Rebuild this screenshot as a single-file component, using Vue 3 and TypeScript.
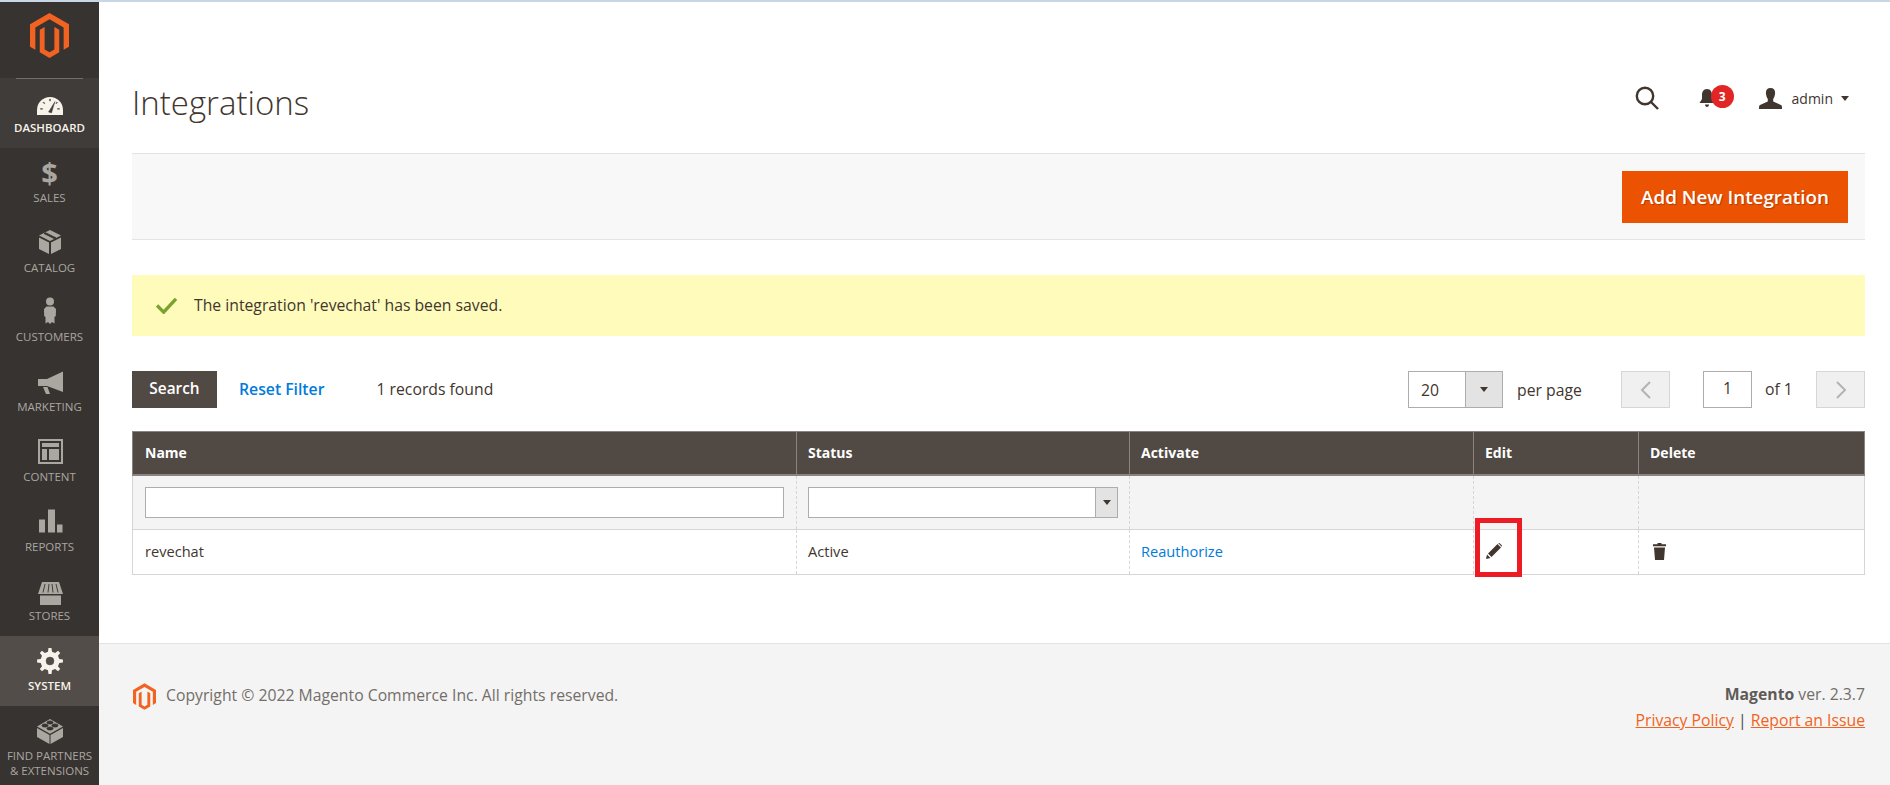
<script setup lang="ts">
function gear(cx: number, cy: number, ro: number, ri: number, n: number): string {
  const pts: string[] = []
  const step = (Math.PI * 2) / n
  for (let i = 0; i < n; i++) {
    const a = i * step - Math.PI / 2
    const w = step * 0.2
    const p = [
      [a - w * 1.35, ri],
      [a - w * 0.75, ro],
      [a + w * 0.75, ro],
      [a + w * 1.35, ri],
    ]
    for (const [t, r] of p) {
      pts.push(`${(cx + r * Math.cos(t)).toFixed(2)} ${(cy + r * Math.sin(t)).toFixed(2)}`)
    }
  }
  return 'M' + pts.join('L') + 'Z'
}

interface Shape { d: string; cut?: boolean }
interface Item { label: string[]; active?: boolean; sys?: boolean; glyph?: string; shapes?: Shape[]; shift?: number }

const items: Item[] = [
  {
    label: ['Dashboard'], active: true, shift: 3,
    shapes: [
      { d: 'M3 25V20A13 13 0 0 1 29 20V25Z' },
      { d: 'M14.500 22L21 11.500L17.500 23Z', cut: true },
      { d: 'M15.600 9h0.800v2h-0.800ZM9 12.500l0.600-0.600 1.300 1.300-0.600 0.600ZM6.500 18.500h2v0.800h-2ZM23 11.900l0.600 0.600-1.300 1.300-0.600-0.600ZM23.500 18.500h2v0.800h-2Z', cut: true },
    ],
  },
  { label: ['Sales'], glyph: '$' },
  {
    label: ['Catalog'], shift: -1,
    shapes: [
      { d: 'M5 11.500L15 16.500V28L5 23Z' },
      { d: 'M27 11.500L17 16.500V28L27 23Z' },
      { d: 'M16 4L27 9.500L16 15L5 9.500Z' },
      { d: 'M10 7.500L11.500 6.700L22 11.900L20.500 12.700Z', cut: true },
    ],
  },
  {
    label: ['Customers'], shift: -1,
    shapes: [
      { d: 'M12 6.500a4 4 0 1 0 8 0a4 4 0 1 0-8 0Z' },
      { d: 'M12.500 11.500H19.500L22 14L21.800 21L20.500 22V28.500L18 27L16 29L14 27L11.500 28.500V22L10.200 21L10 14Z' },
    ],
  },
  {
    label: ['Marketing'],
    shapes: [
      { d: 'M29 5.500V26L13 20H4V13H13Z' },
      { d: 'M9 21H13.500L16 28H12Z' },
    ],
  },
  {
    label: ['Content'], shift: -1,
    shapes: [
      { d: 'M4 4H29V29H4ZM6 6V27H27V6Z' },
      { d: 'M8 8H25V12H8ZM8 14H13V25H8ZM15 14H25V25H15Z' },
    ],
  },
  {
    label: ['Reports'], shift: -1,
    shapes: [{ d: 'M5 14.500H11V27.500H5ZM14 4.500H21V27.500H14ZM23 19.500H28.500V27.500H23Z' }],
  },
  {
    label: ['Stores'], shift: 2,
    shapes: [
      { d: 'M8 5H25L29 17H4Z' },
      { d: 'M11 7L9 15.500M15 7L14 15.500M18 7L19 15.500M22 7L24 15.500', cut: true },
      { d: 'M6 18.500H27V28H6Z' },
    ],
  },
  {
    label: ['System'], active: true, sys: true,
    shapes: [
      { d: gear(16, 16, 13, 9.500, 8) },
      { d: 'M12 16a4 4 0 1 0 8 0a4 4 0 1 0-8 0Z', cut: true },
    ],
  },
  {
    label: ['Find Partners', '& Extensions'],
    shapes: [
      { d: 'M3 13L15.500 20V29L3 22Z' },
      { d: 'M29 13L16.500 20V29L29 22Z' },
      { d: 'M16 4L29 11.500L16 18.800L3 11.500Z' },
      { d: 'M8 10.500a3 1.500 0 1 0 6 0a3 1.500 0 1 0-6 0ZM18 10.500a3 1.500 0 1 0 6 0a3 1.500 0 1 0-6 0ZM13 7.500a3 1.500 0 1 0 6 0a3 1.500 0 1 0-6 0ZM13 13.500a3 1.500 0 1 0 6 0a3 1.500 0 1 0-6 0Z', cut: true },
    ],
  },
]

const columns = ['Name', 'Status', 'Activate', 'Edit', 'Delete']
const widths = [664, 333, 344, 165, 226]
const logo = 'M20 0L40 11.500V34.500L34.500 37.700V14.700L20 6.300L5.500 14.700V37.700L0 34.500V11.500ZM20 46L10 40.200V17.200L15 14.300V37.400L20 40.300L25 37.400V14.300L30 17.200V40.200Z'
</script>

<template>
  <div class="page">
    <div class="topline"></div>
    <div class="shell">
      <aside class="sidebar">
        <div class="logo-zone">
          <svg class="logo" viewBox="0 0 40 46" width="39" height="45"><path :d="logo" /></svg>
        </div>
        <nav>
          <div
            v-for="item in items"
            :key="item.label[0]"
            class="nav-item"
            :class="{ active: item.active, sys: item.sys }"
          >
            <div class="nav-icon" :style="{ transform: `translateY(${item.shift ?? 0}px)` }">
              <span v-if="item.glyph" class="glyph">{{ item.glyph }}</span>
              <svg v-else viewBox="0 0 32 32" width="32" height="32">
                <path
                  v-for="(s, i) in item.shapes"
                  :key="i"
                  :d="s.d"
                  :class="s.cut ? 'cut' : 'solid'"
                  fill-rule="evenodd"
                />
              </svg>
            </div>
            <div class="nav-label">
              <div v-for="l in item.label" :key="l">{{ l }}</div>
            </div>
          </div>
        </nav>
      </aside>

      <div class="main">
        <div class="content">
          <header class="head">
            <h1>Integrations</h1>
            <div class="head-actions">
              <svg class="search" viewBox="0 0 24 24" width="24" height="24">
                <circle cx="10" cy="10" r="8.200" />
                <path d="M16 16L23 23" />
              </svg>
              <div class="bell">
                <svg viewBox="0 0 16 20" width="16" height="20">
                  <path d="M8 1C4.500 1 3 4 3 7V11L0.500 15H15.500L13 11V7C13 4 11.500 1 8 1ZM6 16.500H10C10 18 9 19 8 19S6 18 6 16.500Z" />
                </svg>
                <span class="badge">3</span>
              </div>
              <div class="user">
                <svg viewBox="0 0 23 21" width="23" height="21">
                  <path d="M11.500 0C8 0 6.500 2.500 7 6C7.300 8 8 10 8.800 11V13.500L1 17C0 17.500 0 19 0 21H23C23 19 23 17.500 22 17L14.200 13.500V11C15 10 15.700 8 16 6C16.500 2.500 15 0 11.500 0Z" />
                </svg>
                <span>admin</span>
                <i class="caret"></i>
              </div>
            </div>
          </header>

          <div class="action-bar">
            <button class="primary">Add New Integration</button>
          </div>

          <div class="message">
            <svg viewBox="0 0 22 18" width="21" height="17">
              <path d="M1 9L8 16L21 2" />
            </svg>
            <span>The integration 'revechat' has been saved.</span>
          </div>

          <div class="toolbar">
            <button class="search-btn">Search</button>
            <a class="reset">Reset Filter</a>
            <span class="found">1 records found</span>
            <div class="pager">
              <div class="per-select">
                <span class="per-value">20</span>
                <span class="arrow-box"><i class="caret"></i></span>
              </div>
              <span class="per-label">per page</span>
              <div class="page-btn prev">
                <svg viewBox="0 0 12 20" width="12" height="20"><path d="M10 2L2 10L10 18" /></svg>
              </div>
              <div class="page-input">1</div>
              <span class="of">of 1</span>
              <div class="page-btn next">
                <svg viewBox="0 0 12 20" width="12" height="20"><path d="M2 2L10 10L2 18" /></svg>
              </div>
            </div>
          </div>

          <table class="grid">
            <colgroup>
              <col v-for="(w, i) in widths" :key="i" :style="{ width: w + 'px' }" />
            </colgroup>
            <thead>
              <tr><th v-for="c in columns" :key="c">{{ c }}</th></tr>
            </thead>
            <tbody>
              <tr class="filters">
                <td><div class="field"></div></td>
                <td>
                  <div class="field select">
                    <span class="arrow-box"><i class="caret"></i></span>
                  </div>
                </td>
                <td></td>
                <td></td>
                <td></td>
              </tr>
              <tr class="row">
                <td>revechat</td>
                <td>Active</td>
                <td><a class="link">Reauthorize</a></td>
                <td class="edit-cell">
                  <svg class="pencil" viewBox="0 0 16 16" width="16" height="16">
                    <path d="M0 16L1 11.500L4.500 15ZM2 10.500L11.500 1L15 4.500L5.500 14ZM12.300 0.300C13 -0.200 13.500 0 14 0.500L15.500 2C16 2.500 16.200 3 15.700 3.700Z" />
                  </svg>
                  <span class="highlight"></span>
                </td>
                <td>
                  <svg class="trash" viewBox="0 0 13 17" width="13" height="17">
                    <path d="M4.500 0H8.500V1.300H13V3.200H0V1.300H4.500ZM1 4.500H12L11 17H2Z" />
                  </svg>
                </td>
              </tr>
            </tbody>
          </table>
        </div>

        <footer class="footer">
          <div class="copy">
            <svg class="logo" viewBox="0 0 40 46" width="23" height="27"><path :d="logo" /></svg>
            <span>Copyright © 2022 Magento Commerce Inc. All rights reserved.</span>
          </div>
          <div class="legal">
            <div><b>Magento</b> ver. 2.3.7</div>
            <div class="legal-links"><a>Privacy Policy</a> | <a>Report an Issue</a></div>
          </div>
        </footer>
      </div>
    </div>
  </div>
</template>

<style>
html, body { margin: 0; background: #fff; overflow: hidden; }
</style>

<style scoped>
.page {
  height: 785px;
  display: flex;
  flex-direction: column;
  overflow: hidden;
  font-family: "Open Sans", "Liberation Sans", sans-serif;
  font-size: 14px;
  color: #41362f;
}
.topline { height: 2px; background: #c9d6e8; flex: none; }
.shell { flex: 1; display: flex; min-height: 0; }

.sidebar { width: 99px; flex: none; background: #373330; overflow: hidden; }
.logo-zone {
  height: 76px;
  display: flex;
  justify-content: center;
  padding-top: 11px;
  box-sizing: border-box;
  position: relative;
}
.logo-zone::after {
  content: "";
  position: absolute;
  left: 16px;
  right: 16px;
  bottom: -1px;
  height: 1px;
  background: #736e69;
}
.logo path { fill: #f26322; }
.nav-item {
  height: 69.75px;
  box-sizing: border-box;
  padding-top: 11px;
  color: #aaa6a0;
  text-align: center;
}
.nav-item.active { background: #403c39; color: #f7f3eb; }
.nav-item.sys { background: #524d49; }
.nav-icon { height: 28px; display: flex; align-items: center; justify-content: center; }
.nav-icon svg { flex: none; }
.solid { fill: currentColor; }
.cut { fill: #403c39; stroke: #403c39; stroke-width: 0.4; }
.nav-item:not(.active) .cut { fill: #373330; stroke: #373330; stroke-width: 0.9; }
.sys .cut { fill: #524d49; stroke: #524d49; }
.glyph { font-size: 29px; font-weight: 700; line-height: 28px; }
.nav-label {
  margin-top: 3px;
  font-size: 11.5px;
  line-height: 15px;
  text-transform: uppercase;
  white-space: nowrap;
}
.active .nav-label { font-weight: 600; }

.main { flex: 1; min-width: 0; display: flex; flex-direction: column; }
.content { flex: 1; padding: 0 25px 0 33px; }

.head { height: 151px; display: flex; align-items: flex-start; justify-content: space-between; }
h1 {
  margin: 80px 0 0;
  font-size: 33px;
  line-height: 42px;
  font-weight: 300;
  color: #41362f;
}
.head-actions { display: flex; align-items: center; margin-top: 84px; height: 24px; padding-right: 16px; }
.search { fill: none; stroke: #41362f; stroke-width: 2.4; margin-right: -1px; }
.bell { position: relative; margin-left: 41px; display: flex; }
.bell svg { fill: #41362f; }
.badge {
  position: absolute;
  left: 12px;
  top: -3px;
  width: 23px;
  height: 23px;
  border-radius: 50%;
  background: #e22626;
  color: #fff;
  font-size: 12px;
  font-weight: 700;
  line-height: 23px;
  text-align: center;
}
.user { display: flex; align-items: center; margin-left: 44px; }
.user svg { fill: #41362f; }
.user span { margin-left: 10px; font-size: 14px; color: #41362f; }
.caret {
  display: block;
  width: 0;
  height: 0;
  border-left: 4.5px solid transparent;
  border-right: 4.5px solid transparent;
  border-top: 5px solid #41362f;
}
.user .caret { margin-left: 8px; }

.action-bar {
  height: 87px;
  box-sizing: border-box;
  background: #f8f8f8;
  border-top: 1px solid #e3e3e3;
  border-bottom: 1px solid #e3e3e3;
  display: flex;
  align-items: center;
  justify-content: flex-end;
  padding-right: 17px;
}
.primary {
  width: 226px;
  height: 52px;
  border: 0;
  background: #eb5202;
  color: #fff;
  font-family: inherit;
  font-size: 18.8px;
  font-weight: 600;
  text-shadow: 1px 1px 1px rgba(0, 0, 0, 0.25);
  padding: 0;
}

.message {
  margin-top: 35px;
  height: 61px;
  background: #fffbbb;
  display: flex;
  align-items: center;
  padding-left: 24px;
  color: #41362f;
  font-size: 15.75px;
}
.message svg { fill: none; stroke: #79a22e; stroke-width: 3.6; margin-right: 17px; }
.message span { margin-bottom: 2px; }

.toolbar { margin-top: 35px; height: 37px; display: flex; align-items: center; font-size: 15.75px; }
.search-btn {
  width: 85px;
  height: 37px;
  border: 0;
  background: #514943;
  color: #fff;
  font-family: inherit;
  font-size: 15.4px;
  font-weight: 600;
  padding: 0 0 2px;
}
.reset { margin-left: 22px; margin-bottom: 2px; color: #007bdb; font-weight: 600; }
.found { margin-left: 52px; margin-bottom: 2px; }
.pager { margin-left: auto; display: flex; align-items: center; }
.per-select {
  width: 95px;
  height: 37px;
  box-sizing: border-box;
  border: 1px solid #adadad;
  display: flex;
  align-items: center;
  justify-content: space-between;
}
.per-value { padding-left: 12px; font-size: 15.75px; }
.arrow-box {
  width: 36px;
  align-self: stretch;
  background: #e3e3e3;
  border-left: 1px solid #adadad;
  display: flex;
  align-items: center;
  justify-content: center;
}
.per-label { margin-left: 14px; width: 104px; }
.page-btn {
  width: 49px;
  height: 37px;
  box-sizing: border-box;
  border: 1px solid #d6d6d6;
  background: #f0f0f0;
  display: flex;
  align-items: center;
  justify-content: center;
}
.page-btn svg { fill: none; stroke: #b3b3b3; stroke-width: 2; }
.page-input {
  margin-left: 33px;
  width: 49px;
  height: 37px;
  box-sizing: border-box;
  border: 1px solid #adadad;
  text-align: center;
  line-height: 33px;
}
.of { margin-left: 13px; width: 51px; margin-bottom: 2px; }

.grid {
  margin-top: 23px;
  width: 1732px;
  table-layout: fixed;
  border-collapse: collapse;
  font-size: 14.6px;
}
th {
  height: 43px;
  padding: 0 11px;
  box-sizing: border-box;
  background: #514943;
  color: #fff;
  text-align: left;
  font-size: 14px;
  font-weight: 700;
  border: 1px solid #8a837f;
  border-bottom-width: 2px;
}
th:first-child { padding-left: 12px; }
td {
  box-sizing: border-box;
  padding: 0 11px;
  border-left: 1px dashed #d6d6d6;
  border-right: 1px dashed #d6d6d6;
  border-bottom: 1px solid #d6d6d6;
}
td:first-child { padding-left: 12px; padding-right: 12px; border-left: 1px solid #d6d6d6; }
td:last-child { border-right: 1px solid #d6d6d6; }
.filters td { height: 55px; background: #f4f4f4; }
.row td { height: 45px; padding-bottom: 2px; }
.field {
  height: 31px;
  box-sizing: border-box;
  background: #fff;
  border: 1px solid #adadad;
}
.select { display: flex; justify-content: flex-end; }
.select .arrow-box { width: 21px; }
.link { color: #007bdb; }
.row svg { display: block; fill: #41362f; }
.pencil { margin-left: 1px; }
.trash { margin-left: 3px; }
.edit-cell { position: relative; }
.highlight {
  position: absolute;
  left: 1px;
  top: -12px;
  width: 47px;
  height: 59px;
  box-sizing: border-box;
  border: 5px solid #ed1c24;
}

.footer {
  flex: none;
  height: 142px;
  box-sizing: border-box;
  background: #f4f4f4;
  border-top: 1px solid #e3e3e3;
  padding: 39px 25px 0 33px;
  display: flex;
  justify-content: space-between;
  align-items: flex-start;
  font-size: 15.75px;
  color: #736e69;
}
.copy { display: flex; align-items: center; line-height: 27px; }
.copy svg { margin: 0 10px 0 1px; }
.copy span { margin-top: -3px; }
.legal { text-align: right; line-height: 26px; margin-top: -2px; }
.legal b { color: #5f5b57; }
.legal-links { color: #514943; }
.legal-links a { color: #f26322; text-decoration: underline; }
</style>
